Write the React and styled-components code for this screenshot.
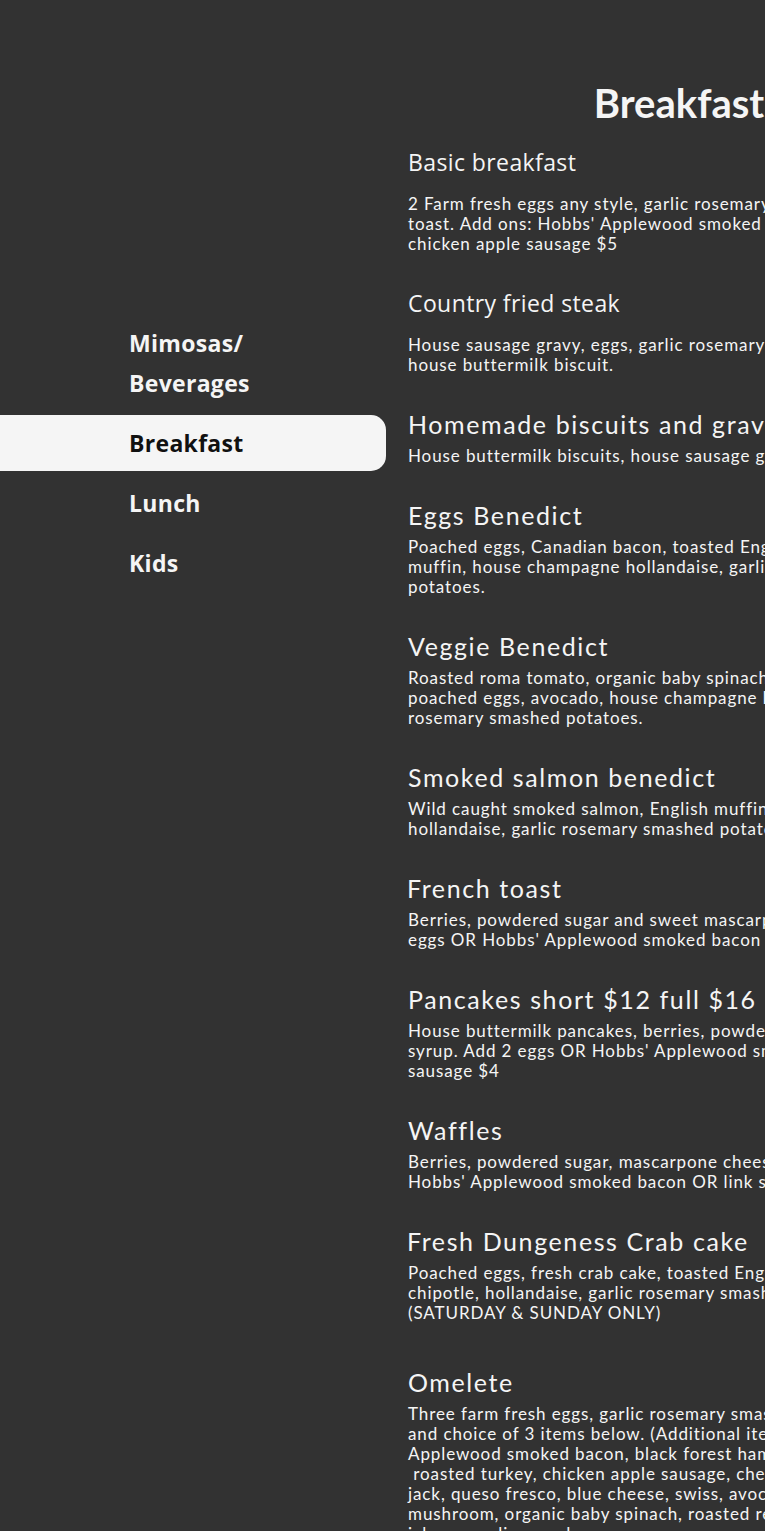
import React from 'react'
import styled, {createGlobalStyle} from "styled-components";

const GlobalStyle = createGlobalStyle`
  * {
    box-sizing: border-box;
  }
  html, body {
    margin: 0;
    padding: 0;
    background: #323232;
    overflow: hidden;
  }
`;

const Page = styled.div`
  display: flex;
  width: 765px;
  min-height: 1531px;
  background: #323232;
  overflow: hidden;
  color: #f5f5f5;
`;

const Sidebar = styled.nav`
  flex: 0 0 386px;
  display: flex;
  flex-direction: column;
  gap: 4px;
  padding-top: 315px;
`;

const NavItem = styled.div`
  padding: 8px 20px 8px 129px;
  border-radius: 0 15px 15px 0;
  background: ${props => props.active ? '#f5f5f5' : 'transparent'};
  color: ${props => props.active ? '#111' : '#f5f5f5'};
  font-family: "Open Sans", sans-serif;
  font-weight: 700;
  font-size: 23px;
  letter-spacing: 0.3px;
  line-height: 40px;
`;

const Content = styled.main`
  flex: 0 0 542px;
  min-width: 0;
  margin-left: 22px;
  padding-top: 81px;
`;

const PageTitle = styled.h1`
  margin: 0 0 21px 0;
  text-align: center;
  font-family: Lato, sans-serif;
  font-weight: 700;
  font-size: 40px;
  line-height: 44px;
`;

const Item = styled.section`
  margin-bottom: ${props => props.extra ? '43px' : '33px'};
`;

const ItemTitle = styled.h2`
  margin: 0 0 ${props => props.strong ? '16px' : '6px'} ${props => props.shift ? '-1px' : '0'};
  font-family: ${props => props.strong ? '"Open Sans", sans-serif' : 'Lato, sans-serif'};
  font-weight: ${props => props.strong ? 500 : 400};
  font-size: ${props => props.strong ? '23px' : '25px'};
  letter-spacing: ${props => props.strong ? '0.4px' : '1.6px'};
  line-height: 32px;
  white-space: nowrap;
`;

const Description = styled.p`
  margin: 0;
  font-family: Lato, sans-serif;
  font-size: 17px;
  line-height: 20px;
  letter-spacing: 0.9px;
  white-space: nowrap;
`;

const navItems = [
    {name: <>Mimosas/<br/>Beverages</>},
    {name: 'Breakfast', active: true},
    {name: 'Lunch'},
    {name: 'Kids'}
]

const menu = [
    {
        title: 'Basic breakfast', strong: true,
        lines: [
            '2 Farm fresh eggs any style, garlic rosemary smashed potatoes and',
            "toast. Add ons: Hobbs' Applewood smoked bacon, black forest ham or",
            'chicken apple sausage $5'
        ]
    },
    {
        title: 'Country fried steak', strong: true,
        lines: [
            'House sausage gravy, eggs, garlic rosemary smashed potatoes and',
            'house buttermilk biscuit.'
        ]
    },
    {
        title: 'Homemade biscuits and gravy',
        lines: ['House buttermilk biscuits, house sausage gravy.']
    },
    {
        title: 'Eggs Benedict',
        lines: [
            'Poached eggs, Canadian bacon, toasted English',
            'muffin, house champagne hollandaise, garlic rosemary smashed',
            'potatoes.'
        ]
    },
    {
        title: 'Veggie Benedict',
        lines: [
            'Roasted roma tomato, organic baby spinach, English muffin,',
            'poached eggs, avocado, house champagne hollandaise, garlic',
            'rosemary smashed potatoes.'
        ]
    },
    {
        title: 'Smoked salmon benedict',
        lines: [
            'Wild caught smoked salmon, English muffin, poached eggs,',
            'hollandaise, garlic rosemary smashed potatoes.'
        ]
    },
    {
        title: 'French toast', shift: true,
        lines: [
            'Berries, powdered sugar and sweet mascarpone cheese. Add 2',
            "eggs OR Hobbs' Applewood smoked bacon OR link sausage $4"
        ]
    },
    {
        title: 'Pancakes short $12 full $16',
        lines: [
            'House buttermilk pancakes, berries, powdered sugar and maple',
            "syrup. Add 2 eggs OR Hobbs' Applewood smoked bacon OR link",
            'sausage $4'
        ]
    },
    {
        title: 'Waffles',
        lines: [
            'Berries, powdered sugar, mascarpone cheese. Add 2 eggs OR',
            "Hobbs' Applewood smoked bacon OR link sausage $4"
        ]
    },
    {
        title: 'Fresh Dungeness Crab cake', shift: true, extra: true,
        lines: [
            'Poached eggs, fresh crab cake, toasted English muffin, avocado,',
            'chipotle, hollandaise, garlic rosemary smashed potatoes.',
            '(SATURDAY & SUNDAY ONLY)'
        ]
    },
    {
        title: 'Omelete',
        lines: [
            'Three farm fresh eggs, garlic rosemary smashed potatoes, toast',
            'and choice of 3 items below. (Additional items $1 each) Hobbs\'',
            'Applewood smoked bacon, black forest ham, house sausage,',
            '\u00a0roasted turkey, chicken apple sausage, cheddar, pepper',
            'jack, queso fresco, blue cheese, swiss, avocado, tomato, onion,',
            'mushroom, organic baby spinach, roasted red peppers, bell peppers,',
            'jalapeno, olives and more.'
        ]
    }
]

export default function App() {
    return (
        <>
            <GlobalStyle/>
            <Page>
                <Sidebar>
                    {navItems.map((item, index) => (
                        <NavItem key={index} active={item.active}>{item.name}</NavItem>
                    ))}
                </Sidebar>
                <Content>
                    <PageTitle>Breakfast</PageTitle>
                    {menu.map(item => (
                        <Item key={item.title} extra={item.extra}>
                            <ItemTitle strong={item.strong} shift={item.shift}>{item.title}</ItemTitle>
                            <Description>
                                {item.lines.map((line, i) => (
                                    <React.Fragment key={i}>{line}{i < item.lines.length - 1 && <br/>}</React.Fragment>
                                ))}
                            </Description>
                        </Item>
                    ))}
                </Content>
            </Page>
        </>
    );
}
